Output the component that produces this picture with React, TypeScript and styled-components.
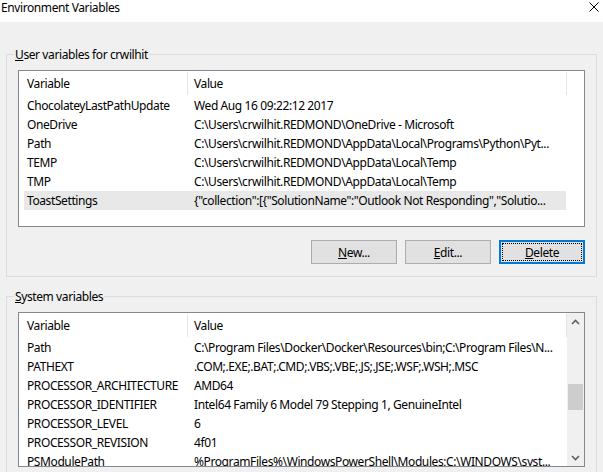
import React from "react";
import styled, { createGlobalStyle } from "styled-components";

interface IVar {
  name: string;
  value: string;
}

const userVars: IVar[] = [
  { name: "ChocolateyLastPathUpdate", value: "Wed Aug 16 09:22:12 2017" },
  { name: "OneDrive", value: "C:\\Users\\crwilhit.REDMOND\\OneDrive - Microsoft" },
  {
    name: "Path",
    value: "C:\\Users\\crwilhit.REDMOND\\AppData\\Local\\Programs\\Python\\Pyt..."
  },
  { name: "TEMP", value: "C:\\Users\\crwilhit.REDMOND\\AppData\\Local\\Temp" },
  { name: "TMP", value: "C:\\Users\\crwilhit.REDMOND\\AppData\\Local\\Temp" },
  {
    name: "ToastSettings",
    value: '{"collection":[{"SolutionName":"Outlook Not Responding","Solutio...'
  }
];

const systemVars: IVar[] = [
  {
    name: "Path",
    value: "C:\\Program Files\\Docker\\Docker\\Resources\\bin;C:\\Program Files\\N..."
  },
  { name: "PATHEXT", value: ".COM;.EXE;.BAT;.CMD;.VBS;.VBE;.JS;.JSE;.WSF;.WSH;.MSC" },
  { name: "PROCESSOR_ARCHITECTURE", value: "AMD64" },
  {
    name: "PROCESSOR_IDENTIFIER",
    value: "Intel64 Family 6 Model 79 Stepping 1, GenuineIntel"
  },
  { name: "PROCESSOR_LEVEL", value: "6" },
  { name: "PROCESSOR_REVISION", value: "4f01" },
  {
    name: "PSModulePath",
    value: "%ProgramFiles%\\WindowsPowerShell\\Modules;C:\\WINDOWS\\syst..."
  }
];

const GlobalStyle = createGlobalStyle`
  html, body {
    margin: 0;
    padding: 0;
    background: #f0f0f0;
  }
  body {
    font-family: "Noto Sans", "Liberation Sans", sans-serif;
    font-size: 12px;
    letter-spacing: -0.4px;
    color: #000;
  }
  * { box-sizing: border-box; }
`;

const Window = styled.div`
  width: 603px;
  height: 472px;
  overflow: hidden;
  background: #f0f0f0;
  display: flex;
  flex-direction: column;
`;

const TitleBar = styled.div`
  height: 22px;
  flex-shrink: 0;
  background: #fff;
  display: flex;
  align-items: flex-start;
  justify-content: space-between;
  padding: 0 4px 0 1px;
  line-height: 16px;
`;

const CloseIcon = styled.svg`
  margin-top: 2px;
`;

const Content = styled.div`
  padding: 32px 6px 0 6px;
  display: flex;
  flex-direction: column;
`;

const GroupBox = styled.div<{ $gap?: number }>`
  position: relative;
  border: 1px solid #dcdcdc;
  padding: 15px 11px 12px 11px;
  margin-top: ${p => p.$gap || 0}px;
`;

const GroupLabel = styled.div`
  position: absolute;
  top: -8px;
  left: 7px;
  padding: 0 1px;
  line-height: 16px;
  background: #f0f0f0;
`;

const ListView = styled.div<{ $height: number }>`
  height: ${p => p.$height}px;
  border: 1px solid #828790;
  background: #fff;
  display: flex;
  overflow: hidden;
`;

const ListMain = styled.div`
  flex: 1;
  display: flex;
  flex-direction: column;
`;

const Header = styled.div`
  height: 25px;
  flex-shrink: 0;
  display: flex;
  align-items: center;
`;

const HeaderCell = styled.div<{ $width: number; $pad: number }>`
  width: ${p => p.$width}px;
  height: 23px;
  line-height: 23px;
  padding-left: ${p => p.$pad}px;
  border-right: 1px solid #e5e5e5;
`;

const Row = styled.div<{ $selected?: boolean }>`
  height: 19px;
  line-height: 19px;
  width: 542px;
  margin-left: 5px;
  flex-shrink: 0;
  display: flex;
  white-space: nowrap;
  background: ${p => (p.$selected ? "#e8e8e8" : "transparent")};
`;

const NameCell = styled.div`
  width: 170px;
  padding-left: 3px;
  overflow: hidden;
`;

const ValueCell = styled.div`
  flex: 1;
  overflow: hidden;
`;

const ScrollBar = styled.div`
  width: 17px;
  flex-shrink: 0;
  background: #f0f0f0;
  display: flex;
  flex-direction: column;
`;

const ScrollButton = styled.div<{ $bottom?: boolean }>`
  height: 17px;
  display: flex;
  align-items: center;
  justify-content: center;
  margin-top: ${p => (p.$bottom ? "auto" : "0")};
`;

const Thumb = styled.div`
  height: 26px;
  margin: 54px 1px 0 1px;
  background: #cdcdcd;
`;

const ButtonRow = styled.div`
  display: flex;
  justify-content: flex-end;
  gap: 8px;
  margin-top: 13px;
`;

const Button = styled.button<{ $focused?: boolean }>`
  position: relative;
  width: 86px;
  height: 24px;
  padding: 0;
  font: inherit;
  letter-spacing: inherit;
  color: #000;
  background: #e1e1e1;
  border: ${p => (p.$focused ? "2px solid #0078d7" : "1px solid #adadad")};
  &::after {
    content: "";
    display: ${p => (p.$focused ? "block" : "none")};
    position: absolute;
    inset: 1px;
    border: 1px dotted #000;
  }
`;

const Chevron = ({ down }: { down?: boolean }) => (
  <svg width="9" height="6" viewBox="0 0 9 6">
    <path
      d={down ? "M1 1 L4.5 4.5 L8 1" : "M1 5 L4.5 1.5 L8 5"}
      fill="none"
      stroke="#606060"
      strokeWidth="1.6"
    />
  </svg>
);

const VarList = (props: {
  data: IVar[];
  height: number;
  selected?: number;
  scroll?: boolean;
}) => {
  const { data, height, selected, scroll } = props;
  return (
    <ListView $height={height}>
      <ListMain>
        <Header>
          <HeaderCell $width={169} $pad={8}>
            Variable
          </HeaderCell>
          <HeaderCell $width={379} $pad={6}>
            Value
          </HeaderCell>
        </Header>
        {data.map((item, i) => (
          <Row key={item.name} $selected={i === selected}>
            <NameCell>{item.name}</NameCell>
            <ValueCell>{item.value}</ValueCell>
          </Row>
        ))}
      </ListMain>
      {scroll && (
        <ScrollBar>
          <ScrollButton>
            <Chevron />
          </ScrollButton>
          <Thumb />
          <ScrollButton $bottom>
            <Chevron down />
          </ScrollButton>
        </ScrollBar>
      )}
    </ListView>
  );
};

const App = () => {
  return (
    <Window>
      <GlobalStyle />
      <TitleBar>
        <span>Environment Variables</span>
        <CloseIcon width="10" height="10" viewBox="0 0 10 10">
          <path d="M0.5 0.5 L9.5 9.5 M9.5 0.5 L0.5 9.5" stroke="#000" strokeWidth="1" />
        </CloseIcon>
      </TitleBar>
      <Content>
        <GroupBox>
          <GroupLabel>
            <u>U</u>ser variables for crwilhit
          </GroupLabel>
          <VarList data={userVars} height={157} selected={5} />
          <ButtonRow>
            <Button>
              <u>N</u>ew...
            </Button>
            <Button>
              <u>E</u>dit...
            </Button>
            <Button $focused>
              <u>D</u>elete
            </Button>
          </ButtonRow>
        </GroupBox>
        <GroupBox $gap={19}>
          <GroupLabel>
            <u>S</u>ystem variables
          </GroupLabel>
          <VarList data={systemVars} height={155} scroll />
        </GroupBox>
      </Content>
    </Window>
  );
};

export default App;
